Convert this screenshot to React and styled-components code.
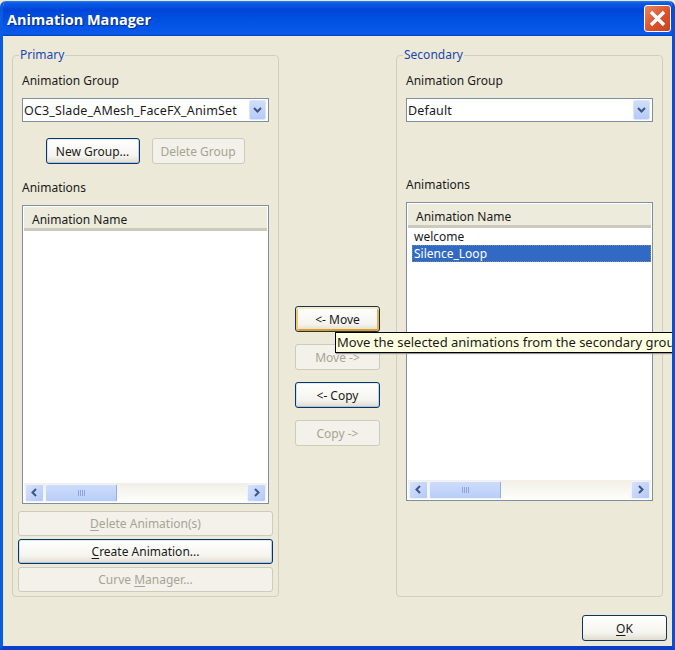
import React from 'react'
import styled, { createGlobalStyle } from 'styled-components'

const Global = createGlobalStyle`
  html, body {
    margin: 0;
    padding: 0;
    background: #ece9d8;
    overflow: hidden;
  }
  * {
    box-sizing: border-box;
  }
`

const Window = styled.div`
  width: 675px;
  height: 649px;
  margin-top: 1px;
  display: flex;
  flex-direction: column;
  overflow: hidden;
  background: #ece9d8;
  border-left: 3px solid #0a5be0;
  border-right: 3px solid #0a4fd8;
  border-bottom: 4px solid #0a3fc8;
  border-radius: 6px 6px 0 0;
  font-family: "Noto Sans", "Liberation Sans", sans-serif;
  font-size: 12px;
  color: #1a1a1a;
`

const TitleBar = styled.div`
  height: 35px;
  margin: 0 -3px;
  padding: 0 4px 0 7px;
  flex: none;
  display: flex;
  align-items: center;
  justify-content: space-between;
  background: linear-gradient(#2a7ff0 0, #0a5ce6 2px, #0044d8 9px, #0050e0 18px, #0758ea 30px, #0a5ce8 33px, #003fb8 35px);
  border-radius: 6px 6px 0 0;
`

const Title = styled.span`
  font-family: "Open Sans", "Liberation Sans", sans-serif;
  font-weight: 700;
  font-size: 14.5px;
  padding-top: 2px;
  color: #fff;
  text-shadow: 1px 1px 1px #0a2a80;
`

const CloseButton = styled.div`
  width: 27px;
  height: 27px;
  display: flex;
  align-items: center;
  justify-content: center;
  border: 1px solid #fff;
  border-radius: 3px;
  background: linear-gradient(135deg, #ea8464, #d9542c 55%, #c8421f);
`

const Content = styled.div`
  flex: 1;
  display: grid;
  grid-template-columns: 267px 117px 267px;
  padding: 12px 0 0 9px;
`

const Group = styled.fieldset`
  margin: 0;
  height: 549px;
  padding: 0 9px;
  min-width: 0;
  border: 1px solid #d0cfbd;
  border-radius: 4px;
  display: flex;
  flex-direction: column;
`

const Legend = styled.legend`
  padding: 0 1px 2px;
  margin-left: -3px;
  line-height: 13px;
  color: #1a47b0;
`

const FieldLabel = styled.div`
  line-height: 15px;
  margin-top: ${(p) => p.$top}px;
`

const Combo = styled.div`
  height: 24px;
  margin: 10px 0 0;
  padding: 0 2px 0 1px;
  display: flex;
  align-items: center;
  justify-content: space-between;
  font-size: 12.5px;
  letter-spacing: 0.15px;
  background: #fff;
  border: 1px solid #7f8f9f;
`

const ComboButton = styled.span`
  width: 17px;
  height: 20px;
  display: flex;
  align-items: center;
  justify-content: center;
  background: linear-gradient(#d0defc, #b4caf8);
  border: 1px solid #dbe6fd;
  border-radius: 2px;
`

const Row = styled.div`
  display: flex;
  justify-content: center;
  gap: 12px;
  margin: 16px 0 0 -1px;
`

const Button = styled.button`
  width: ${(p) => p.$width || '100%'};
  height: ${(p) => p.$height || 26}px;
  padding: 0;
  font: inherit;
  color: #1a1a1a;
  flex: none;
  border: 1px solid #0c3560;
  border-radius: 3px;
  background: linear-gradient(#fff, #f5f4ee 70%, #dfdccf);
  box-shadow: ${(p) =>
    p.$hot
      ? 'inset 0 2px 0 #fdeabf, inset 2px 0 0 #f8c868, inset -2px 0 0 #f0b040, inset 0 -2px 0 #e59a1c'
      : p.$focus
        ? 'inset 0 1px 0 #dcebfd, inset 1px 0 0 #cfe0f8, inset -1px 0 0 #b8d0f0, inset 0 -1px 0 #a9c2e8'
        : 'none'};

  &:disabled {
    color: #a5a595;
    border-color: #cdcbbc;
    background: #f3f1e9;
    box-shadow: none;
  }

  u {
    text-underline-offset: 2px;
  }
`

const List = styled.div`
  height: 299px;
  margin-top: ${(p) => p.$top}px;
  display: flex;
  flex-direction: column;
  background: #fff;
  border: 1px solid #7f8f9f;
  padding: 1px;
`

const Header = styled.div`
  height: 24px;
  flex: none;
  padding: 3px 0 0 8px;
  display: flex;
  align-items: center;
  background: #ecebdc;
  border-bottom: 3px solid #cdcabb;
`

const Rows = styled.div`
  flex: 1;
  padding: 0 0 0 4px;
`

const ListRow = styled.div`
  height: 17px;
  line-height: 17px;
  padding-left: 2px;
  background: ${(p) => (p.$selected ? '#316ac5' : 'transparent')};
  color: ${(p) => (p.$selected ? '#fff' : '#1a1a1a')};
  outline: ${(p) => (p.$selected ? '1px dotted #7c8a8a' : 'none')};
  outline-offset: -1px;
`

const ScrollBar = styled.div`
  height: 19px;
  flex: none;
  display: flex;
  align-items: center;
  padding: 0 1px;
  gap: 1px;
  background: linear-gradient(#f1efe7, #fdfdfa);
`

const ScrollButton = styled.span`
  width: 19px;
  height: 18px;
  flex: none;
  display: flex;
  align-items: center;
  justify-content: center;
  background: linear-gradient(135deg, #d6e2fc, #b3c9f7);
  border: 1px solid #eef3fe;
  border-radius: 2px;
`

const ScrollThumb = styled.span`
  width: 72px;
  height: 18px;
  display: flex;
  align-items: center;
  justify-content: center;
  gap: 1px;
  background: linear-gradient(#cddcfb, #b9cdf8);
  border: 1px solid #eef3fe;
  border-right-color: #98ace0;
  border-radius: 2px;
`

const ScrollSpacer = styled.span`
  flex: 1;
`

const Grip = styled.i`
  width: 1px;
  height: 6px;
  background: #8fa6dc;
`

const BottomButtons = styled.div`
  display: flex;
  flex-direction: column;
  gap: 3px;
  margin: 7px -4px 0 -4px;
`

const Middle = styled.div`
  padding: 258px 16px 0;
  display: flex;
  flex-direction: column;
  gap: 12px;
`

const TooltipAnchor = styled.div`
  position: relative;
`

const Tooltip = styled.div`
  position: absolute;
  left: 40px;
  top: 26px;
  z-index: 2;
  height: 21px;
  padding: 0 1px;
  font-size: 13px;
  line-height: 19px;
  white-space: nowrap;
  background: #ffffe1;
  border: 1px solid #000;
  box-shadow: 1px 1px 1px #999;
`

const Footer = styled.div`
  display: flex;
  justify-content: flex-end;
  padding: 0 5px 5px 0;
`

const Chevron = ({ dir = 'down' }) => {
  const d = { down: 'M1 2 L4.5 5.5 L8 2', left: 'M6 1 L2.5 4.5 L6 8', right: 'M3 1 L6.5 4.5 L3 8' }[dir]
  return (
    <svg width="9" height="9" viewBox="0 0 9 9">
      <path d={d} fill="none" stroke="#3f5582" strokeWidth="2" />
    </svg>
  )
}

const AnimationList = ({ top, children }) => (
  <List $top={top}>
    <Header>Animation Name</Header>
    <Rows>{children}</Rows>
    <ScrollBar>
      <ScrollButton><Chevron dir="left" /></ScrollButton>
      <ScrollThumb><Grip /><Grip /><Grip /><Grip /></ScrollThumb>
      <ScrollSpacer />
      <ScrollButton><Chevron dir="right" /></ScrollButton>
    </ScrollBar>
  </List>
)

const App = () => (
  <>
    <Global />
    <Window>
      <TitleBar>
        <Title>Animation Manager</Title>
        <CloseButton>
          <svg width="19" height="19" viewBox="0 0 19 19">
            <path d="M3 3 L16 16 M16 3 L3 16" stroke="#fff" strokeWidth="3.4" />
          </svg>
        </CloseButton>
      </TitleBar>
      <Content>
        <Group>
          <Legend>Primary</Legend>
          <FieldLabel $top={10}>Animation Group</FieldLabel>
          <Combo>
            OC3_Slade_AMesh_FaceFX_AnimSet
            <ComboButton><Chevron /></ComboButton>
          </Combo>
          <Row>
            <Button $width="94px" $focus>New Group...</Button>
            <Button $width="93px" disabled>Delete Group</Button>
          </Row>
          <FieldLabel $top={16}>Animations</FieldLabel>
          <AnimationList top={10} />
          <BottomButtons>
            <Button $height={25} disabled><u>D</u>elete Animation(s)</Button>
            <Button $height={25} $focus><u>C</u>reate Animation...</Button>
            <Button $height={25} disabled>Curve <u>M</u>anager...</Button>
          </BottomButtons>
        </Group>
        <Middle>
          <TooltipAnchor>
            <Button $hot>&lt;- Move</Button>
            <Tooltip>Move the selected animations from the secondary group to the primary group</Tooltip>
          </TooltipAnchor>
          <Button disabled>Move -&gt;</Button>
          <Button $focus>&lt;- Copy</Button>
          <Button disabled>Copy -&gt;</Button>
        </Middle>
        <Group>
          <Legend>Secondary</Legend>
          <FieldLabel $top={10}>Animation Group</FieldLabel>
          <Combo>
            Default
            <ComboButton><Chevron /></ComboButton>
          </Combo>
          <FieldLabel $top={55}>Animations</FieldLabel>
          <AnimationList top={10}>
            <ListRow>welcome</ListRow>
            <ListRow $selected>Silence_Loop</ListRow>
          </AnimationList>
        </Group>
      </Content>
      <Footer>
        <Button $width="85px"><u>O</u>K</Button>
      </Footer>
    </Window>
  </>
)

export default App
